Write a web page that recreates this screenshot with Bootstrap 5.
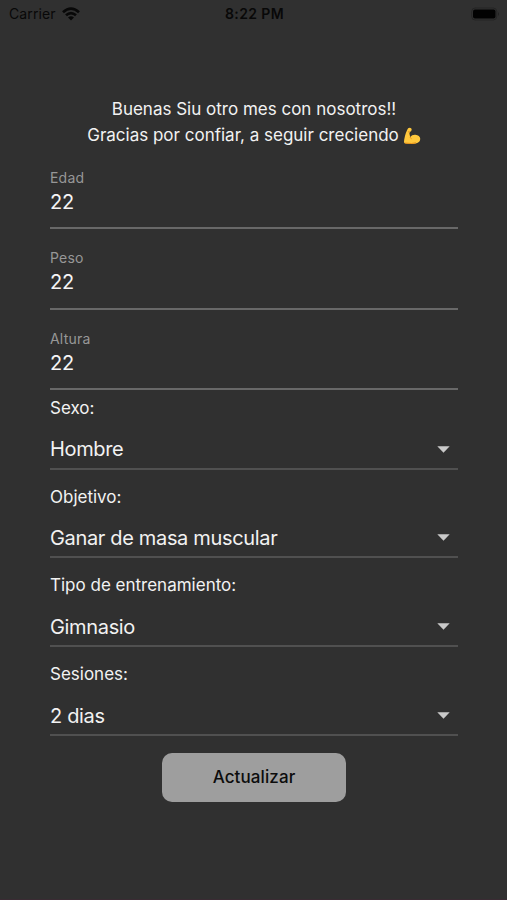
<!DOCTYPE html>
<html lang="es">
<head>
<meta charset="utf-8">
<meta name="viewport" content="width=device-width, initial-scale=1">
<title>Actualizar datos</title>
<link href="https://cdn.jsdelivr.net/npm/bootstrap@5.3.0/dist/css/bootstrap.min.css" rel="stylesheet">
<style>
body{background:#303030;color:#f2f2f2;font-family:Inter,"Liberation Sans",sans-serif}
.screen{height:900px;border-bottom:1px solid #3a2b33;overflow:hidden}
.status{height:28px;color:#080808;font-size:14px;line-height:28px;padding:0 7px 0 9px}
.status>div{flex:1 1 0}
.carrier{letter-spacing:.12px}
.clock{font-weight:600;letter-spacing:.4px}
.form-area{width:408px;margin:0 auto 0 50px}
.greeting{margin-top:69px;font-size:17px;line-height:25px;height:52px;white-space:nowrap}
.g-two{line-height:27px}
.entry{height:80.4px;border-bottom:2px solid #686868;padding-top:20px}
.entry label{font-size:14px;line-height:18px;color:#979797;display:block;letter-spacing:.2px}
.entry input{font-size:20px;line-height:26px;height:26px;color:#f5f5f5;letter-spacing:-.3px;margin-top:2px}
.pick{height:88.9px}
.pick-first{height:79.4px}
.pick-title{font-size:17px;line-height:24px;margin-top:15px}
.pick-first .pick-title{margin-top:6px}
.pick-value{font-size:20px;letter-spacing:-.34px;height:39px;border-bottom:2px solid #505050;padding-right:8px}
.send,.send:hover{width:184px;height:49px;background:#9e9e9e;color:#0c0c0c;border:0;border-radius:10px;font-size:17px;font-weight:500;letter-spacing:.1px;margin-top:17px}
</style>
<script src="https://cdn.jsdelivr.net/npm/bootstrap@5.3.0/dist/js/bootstrap.bundle.min.js" defer></script>
</head>
<body>
<main class="screen">
<header class="status d-flex align-items-center">
<div class="d-flex align-items-center"><span class="carrier">Carrier</span><svg class="ms-1" width="22" height="16" viewBox="0 0 22 16"><g fill="none" stroke="#080808" stroke-width="2.7"><path d="M3 6.2Q11 -1 19 6.2"/><path d="M6 9.3Q11 4.9 16 9.3"/></g><path d="M8 11.4Q11 9 14 11.4L11 14.6Z" fill="#080808"/></svg></div>
<div class="clock text-center">8:22 PM</div>
<div class="d-flex justify-content-end"><svg width="29" height="15" viewBox="0 0 29 15"><rect x=".7" y="1" width="25" height="12" rx="3.5" fill="none" stroke="#242424"/><rect x="2" y="2.5" width="22.5" height="9" rx="2" fill="#020202"/><path d="M27 5Q29 7 27 9Z" fill="#222"/></svg></div>
</header>
<form class="form-area d-flex flex-column">
<div class="greeting text-center"><div class="g-one">Buenas Siu otro mes con nosotros!!</div><div class="g-two d-flex justify-content-center align-items-center"><span>Gracias por confiar, a seguir creciendo</span><svg class="ms-1" width="18" height="18" viewBox="0 0 19 19" role="img" aria-label="Bíceps"><path d="M5.4 1.2Q7.6.2 8.8 1.7Q9.6 2.6 8.7 4.1L7.3 5.3Q6.6 5.8 6.8 7L7.6 10.5Q9.4 7.9 13 8.1Q17.9 8.7 18.2 12.4Q18.3 16.3 13.4 17.3Q7 18.8 1.6 17.2Q.6 16.3 1.3 13.2Q2.6 5.5 5.4 1.2Z" fill="#ffc83d"/><path d="M7.4 10.5Q7.7 12 9.1 12.4M5.4 5.1L7.3 5.3M13.8 16.7Q9.6 18 2.2 17" fill="none" stroke="#e18a16" stroke-width="1"/></svg></div></div>
<div class="entry"><label for="edad">Edad</label><input id="edad" class="form-control-plaintext p-0 border-0" value="22"></div>
<div class="entry"><label for="peso">Peso</label><input id="peso" class="form-control-plaintext p-0 border-0" value="22"></div>
<div class="entry"><label for="altura">Altura</label><input id="altura" class="form-control-plaintext p-0 border-0" value="22"></div>
<div class="pick pick-first d-flex flex-column justify-content-between"><div class="pick-title">Sexo:</div><div class="pick-value d-flex justify-content-between align-items-center"><span>Hombre</span><svg width="13" height="7" viewBox="0 0 13 7"><path d="M.3.3H12.7L6.5 6.7Z" fill="#c9c9c9"/></svg></div></div>
<div class="pick d-flex flex-column justify-content-between"><div class="pick-title">Objetivo:</div><div class="pick-value d-flex justify-content-between align-items-center"><span>Ganar de masa muscular</span><svg width="13" height="7" viewBox="0 0 13 7"><path d="M.3.3H12.7L6.5 6.7Z" fill="#c9c9c9"/></svg></div></div>
<div class="pick d-flex flex-column justify-content-between"><div class="pick-title">Tipo de entrenamiento:</div><div class="pick-value d-flex justify-content-between align-items-center"><span>Gimnasio</span><svg width="13" height="7" viewBox="0 0 13 7"><path d="M.3.3H12.7L6.5 6.7Z" fill="#c9c9c9"/></svg></div></div>
<div class="pick d-flex flex-column justify-content-between"><div class="pick-title">Sesiones:</div><div class="pick-value d-flex justify-content-between align-items-center"><span>2 dias</span><svg width="13" height="7" viewBox="0 0 13 7"><path d="M.3.3H12.7L6.5 6.7Z" fill="#c9c9c9"/></svg></div></div>
<button type="button" class="btn send align-self-center p-0">Actualizar</button>
</form>
</main>
</body>
</html>
